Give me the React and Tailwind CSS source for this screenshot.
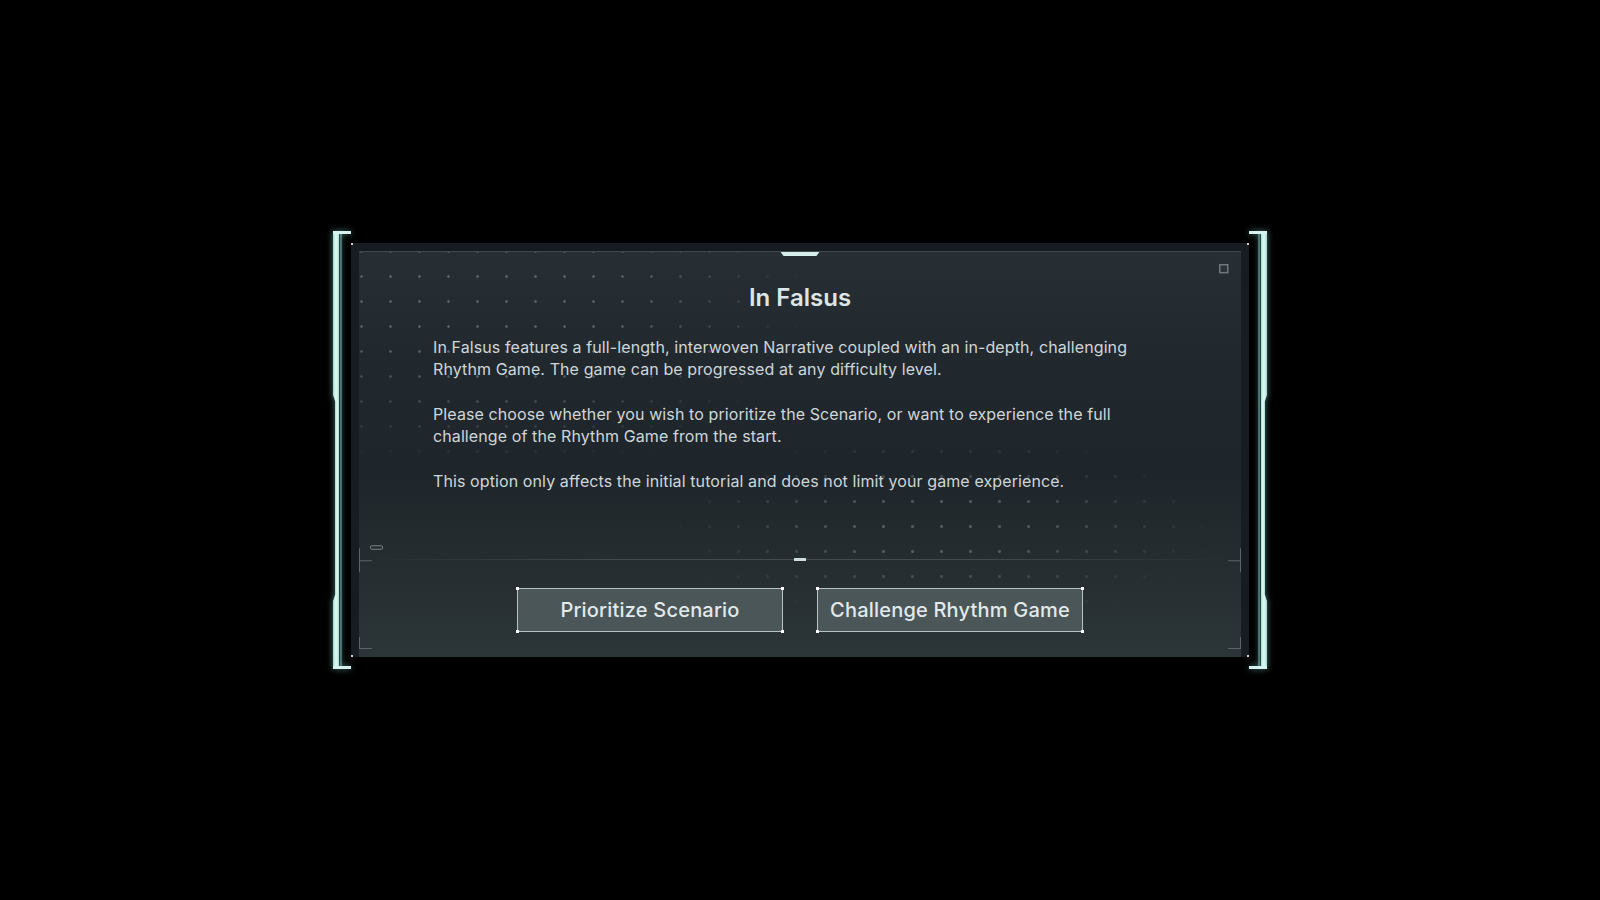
import React from 'react';

// side bracket drawn as svg, mirrored for the right side
const Bracket = ({ flip }) => (
    <svg
        width="18"
        height="438"
        viewBox="0 0 18 438"
        className={`shrink-0 drop-shadow-[0_0_3px_rgba(140,230,220,0.55)] ${flip ? '-scale-x-100' : ''}`}
    >
        <defs>
            <linearGradient id={flip ? 'brR' : 'brL'} x1="0" y1="0" x2="1" y2="0">
                <stop offset="0" stopColor="#9fd9d0" />
                <stop offset="0.5" stopColor="#e6fbf7" />
                <stop offset="1" stopColor="#a8e0d8" />
            </linearGradient>
        </defs>
        <rect x="7" y="3" width="2" height="432" fill="#7fc9c0" opacity="0.45" />
        <rect x="2" y="0" width="4" height="438" fill={`url(#${flip ? 'brR' : 'brL'})`} />
        <polygon points="0,0 6,0 6,170 2,170 0,164" fill={`url(#${flip ? 'brR' : 'brL'})`} />
        <polygon points="2,364 6,364 6,438 0,438 0,370" fill={`url(#${flip ? 'brR' : 'brL'})`} />
        <rect x="0" y="0" width="18" height="3" fill="#d6f3ef" />
        <rect x="0" y="435" width="18" height="3" fill="#d6f3ef" />
    </svg>
);

// thin frame marks on the inner panel (882 x 406)
const FrameMarks = () => (
    <svg className="absolute inset-0 w-full h-full pointer-events-none" viewBox="0 0 882 406" preserveAspectRatio="none">
        <g stroke="#5b6569" strokeWidth="1" fill="none">
            <path d="M0.5 297 V321 M0 309.5 H13" />
            <path d="M0.5 386 V398 M0 397.5 H13" />
            <path d="M881.5 297 V321 M882 309.5 H869" />
            <path d="M881.5 386 V398 M882 397.5 H869" />
        </g>
        <rect x="11.5" y="294.5" width="12" height="3.5" rx="1" stroke="#7c868a" fill="none" />
        <rect x="860.75" y="12.75" width="8" height="8" stroke="#6f797d" strokeWidth="1.5" fill="#2b3338" />
    </svg>
);

const ChoiceButton = ({ children }) => (
    <button className="relative w-[266px] h-[44px] bg-[#4a5658] border-[1.5px] border-[#b9c3c5] text-[20px] font-medium text-[#e2e9eb] tracking-[0.2px]">
        <span className="absolute -left-[2px] -top-[2px] w-[3px] h-[3px] bg-white" />
        <span className="absolute -right-[2px] -top-[2px] w-[3px] h-[3px] bg-white" />
        <span className="absolute -left-[2px] -bottom-[2px] w-[3px] h-[3px] bg-white" />
        <span className="absolute -right-[2px] -bottom-[2px] w-[3px] h-[3px] bg-white" />
        {children}
    </button>
);

export default function App() {
    return (
        <div
            className="w-full h-screen bg-black flex items-center justify-center"
            style={{ fontFamily: 'Inter, "Noto Sans", sans-serif' }}
        >
            <div className="flex items-center">
                <Bracket />

                {/* panel */}
                <div className="relative w-[898px] h-[414px] bg-[#161c21] pt-2 px-2 flex">
                    <span className="absolute left-0 top-0 w-[2px] h-[2px] bg-white/80" />
                    <span className="absolute right-0 top-0 w-[2px] h-[2px] bg-white/80" />
                    <span className="absolute left-0 bottom-0 w-[2px] h-[2px] bg-white/80" />
                    <span className="absolute right-0 bottom-0 w-[2px] h-[2px] bg-white/80" />

                    <div className="relative flex-1 flex flex-col items-center border-t border-white/10 bg-[linear-gradient(180deg,#272e34_0%,#21282d_30%,#1f262b_55%,#262e31_80%,#2c3537_100%)] overflow-hidden">
                        {/* dot grid, top-left */}
                        <div className="absolute inset-0 bg-[radial-gradient(circle,rgba(190,210,220,0.32)_1px,transparent_1.6px)] [background-size:29px_25px] [background-position:-12px_12px] [mask-image:radial-gradient(ellipse_330px_180px_at_15%_12%,black_35%,transparent_100%)]" />
                        {/* dot grid, lower middle */}
                        <div className="absolute inset-0 bg-[radial-gradient(circle,rgba(190,210,220,0.3)_1.2px,transparent_1.8px)] [background-size:29px_25px] [background-position:-12px_12px] [mask-image:radial-gradient(ellipse_280px_100px_at_66%_68%,black_25%,transparent_100%)]" />

                        {/* top tab */}
                        <div className="absolute top-0 left-1/2 -translate-x-1/2 w-[39px] h-[4px] bg-[#d6eeeb] [clip-path:polygon(0_0,100%_0,92%_100%,8%_100%)] shadow-[0_0_6px_rgba(180,230,225,0.6)]" />

                        <FrameMarks />

                        <h1 className="relative mt-[30px] text-[24px] leading-[32px] font-semibold text-[#dde5e7]">
                            In Falsus
                        </h1>

                        <div className="relative self-stretch pl-[74px] mt-[22px] text-[16px] leading-[22px] text-[#cfd6d9] tracking-[0.1px]">
                            <p className="mb-[23px]">
                                In Falsus features a full-length, interwoven Narrative coupled with an in-depth, challenging
                                <br />
                                Rhythm Game. The game can be progressed at any difficulty level.
                            </p>
                            <p className="mb-[23px]">
                                Please choose whether you wish to prioritize the Scenario, or want to experience the full
                                <br />
                                challenge of the Rhythm Game from the start.
                            </p>
                            <p>This option only affects the initial tutorial and does not limit your game experience.</p>
                        </div>

                        {/* divider */}
                        <div className="relative self-stretch mx-[13px] mt-[66px] h-[3px] flex items-center justify-center">
                            <div className="absolute inset-x-0 top-[1px] h-px bg-[linear-gradient(90deg,transparent,rgba(150,170,175,0.25)_30%,rgba(150,170,175,0.25)_70%,transparent)]" />
                            <div className="relative w-[12px] h-[3px] bg-[#cfdcdc]" />
                        </div>

                        <div className="relative flex gap-[34px] mt-[27px]">
                            <ChoiceButton>Prioritize Scenario</ChoiceButton>
                            <ChoiceButton>Challenge Rhythm Game</ChoiceButton>
                        </div>
                    </div>
                </div>

                <Bracket flip />
            </div>
        </div>
    );
}
